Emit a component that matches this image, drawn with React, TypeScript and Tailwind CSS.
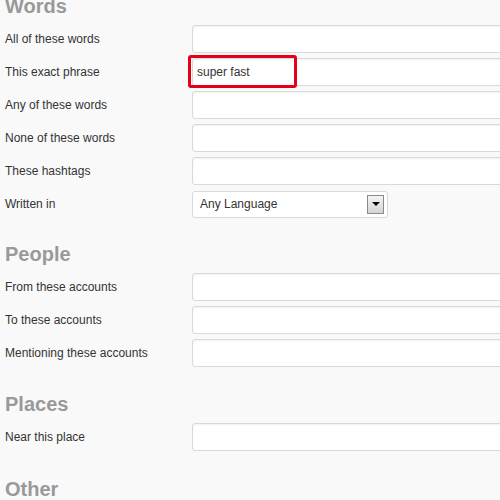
import React from "react";

type Row = { label: string; value?: string; highlight?: boolean };

const Field = ({ label, value, highlight }: Row) => (
  <div className="flex items-center h-[28px]">
    <div className="w-[192px] shrink-0 pl-[5px] text-[12px] text-[#333]">{label}</div>
    <div className="relative flex-1 h-[28px]">
      <div className="h-full w-[400px] bg-white border border-[#d9d9d9] rounded-[3px] shadow-[inset_0_1px_2px_rgba(0,0,0,0.06)] flex items-center px-[4px] text-[12px] text-[#333]">
        {value}
      </div>
      {highlight && (
        <div className="absolute left-[-4px] top-[-3px] w-[109px] h-[33px] border-[3px] border-[#e5001a] rounded-[3px]" />
      )}
    </div>
  </div>
);

const Heading = ({ children }: { children: React.ReactNode }) => (
  <div className="h-[24px] leading-[24px] text-[20px] font-bold text-[#999] pl-[5px]">{children}</div>
);

export default function App() {
  return (
    <div className="w-[500px] h-[500px] overflow-hidden bg-[#f9f9f9] font-['Liberation_Sans',Arial,sans-serif]">
      <div className="-mt-[6px] flex flex-col">
        <Heading>Words</Heading>
        <div className="flex flex-col gap-[5px] mt-[7px]">
          <Field label="All of these words" />
          <Field label="This exact phrase" value="super fast" highlight />
          <Field label="Any of these words" />
          <Field label="None of these words" />
          <Field label="These hashtags" />
          <div className="flex items-center h-[28px]">
            <div className="w-[192px] shrink-0 pl-[5px] text-[12px] text-[#333]">Written in</div>
            <div className="w-[196px] h-[27px] bg-white border border-[#d9d9d9] rounded-[3px] flex items-center justify-between pl-[7px] pr-[3px] text-[12px] text-[#333]">
              <span>Any Language</span>
              <div className="w-[17px] h-[19px] border border-[#8a8a8a] bg-gradient-to-b from-[#f4f4f4] to-[#d4d4d4] flex items-center justify-center">
                <div className="w-0 h-0 border-l-[4px] border-r-[4px] border-t-[4px] border-l-transparent border-r-transparent border-t-black" />
              </div>
            </div>
          </div>
        </div>

        <div className="mt-[24px]">
          <Heading>People</Heading>
        </div>
        <div className="flex flex-col gap-[5px] mt-[7px]">
          <Field label="From these accounts" />
          <Field label="To these accounts" />
          <Field label="Mentioning these accounts" />
        </div>

        <div className="mt-[25px]">
          <Heading>Places</Heading>
        </div>
        <div className="flex flex-col gap-[5px] mt-[7px]">
          <Field label="Near this place" />
        </div>

        <div className="mt-[26px]">
          <Heading>Other</Heading>
        </div>
      </div>
    </div>
  );
}
